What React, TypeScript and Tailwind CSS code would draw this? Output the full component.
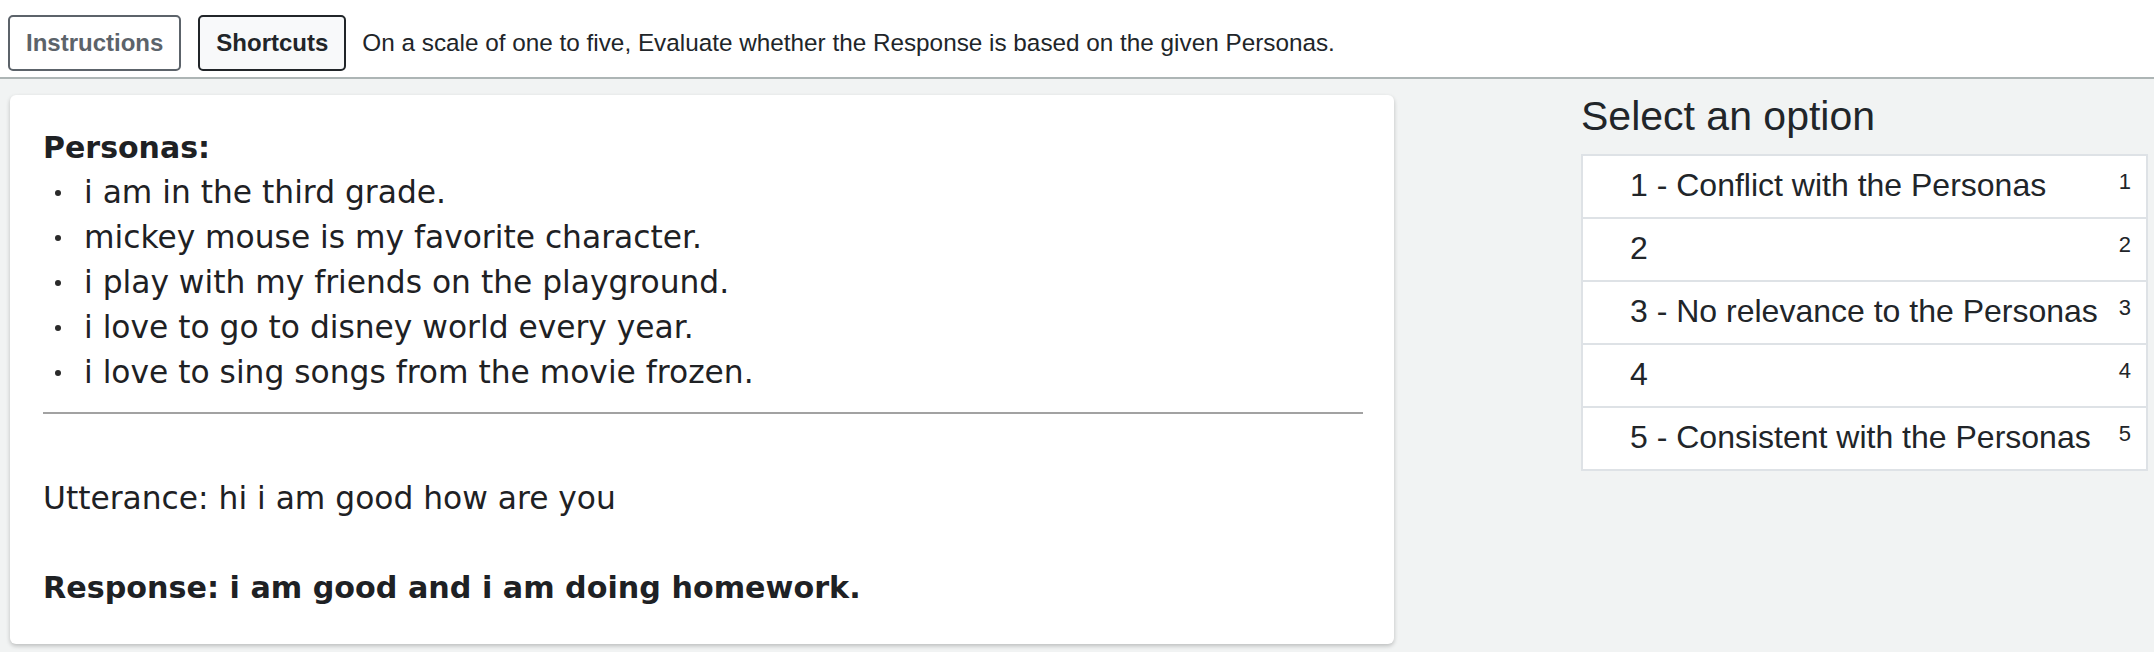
import React from 'react';

const personas: string[] = [
  'i am in the third grade.',
  'mickey mouse is my favorite character.',
  'i play with my friends on the playground.',
  'i love to go to disney world every year.',
  'i love to sing songs from the movie frozen.',
];

const options: { label: string; key: string }[] = [
  { label: '1 - Conflict with the Personas', key: '1' },
  { label: '2', key: '2' },
  { label: '3 - No relevance to the Personas', key: '3' },
  { label: '4', key: '4' },
  { label: '5 - Consistent with the Personas', key: '5' },
];

const App: React.FC = () => {
  return (
    <div className="min-h-[652px] flex flex-col bg-[#f1f3f3] text-[#212529] font-['Liberation_Sans',Arial,sans-serif]">
      {/* Top toolbar */}
      <div className="flex items-center gap-4 pl-[8px] pt-[15px] pb-[6px] bg-white border-b-2 border-[#adb5b5]">
        <button className="px-4 py-2 text-[24px] leading-[36px] font-bold text-[#5c636a] bg-white border-2 border-[#5c636a] rounded-[5px]">
          Instructions
        </button>
        <button className="ml-[1px] px-4 py-2 text-[24px] leading-[36px] font-bold text-[#212529] bg-[#f8f9fa] border-2 border-[#212529] rounded-[5px]">
          Shortcuts
        </button>
        <span className="text-[24.3px] leading-[36px]">
          On a scale of one to five, Evaluate whether the Response is based on the given Personas.
        </span>
      </div>

      {/* Main area */}
      <div className="flex-1 flex items-start">
        {/* Dialogue card */}
        <div className="ml-[10px] mt-[16px] w-[1384px] bg-white rounded-[6px] shadow-[0_2px_4px_rgba(0,0,0,0.22)] pt-[30px] pb-[34px] pl-[33px] pr-[31px] font-['DejaVu_Sans',sans-serif] text-[#1e2124]">
          <div className="text-[30px] leading-[45px] font-bold">Personas:</div>
          <ul>
            {personas.map((p) => (
              <li key={p} className="flex text-[31.3px] leading-[45px]">
                <span className="w-[41px] shrink-0">
                  <span className="block ml-[12px] mt-[20px] w-[6px] h-[6px] rounded-full bg-[#2a2a2a]" />
                </span>
                <span>{p}</span>
              </li>
            ))}
          </ul>
          <div className="mt-[17px] h-[2px] bg-[#a2a2a2]" />
          <p className="mt-[62px] text-[31.3px] leading-[45px]">Utterance: hi i am good how are you</p>
          <p className="mt-[44px] text-[30.2px] leading-[45px] font-bold">
            Response: i am good and i am doing homework.
          </p>
        </div>

        {/* Options panel */}
        <div className="ml-[187px] w-[567px] pt-[13px]">
          <h2 className="text-[41px] leading-[49px] font-normal">Select an option</h2>
          <div className="mt-[13px] bg-white border-2 border-[#dee2e6]">
            {options.map((o, i) => (
              <div
                key={o.key}
                className={
                  i === 0
                    ? 'flex items-start h-[61px] pt-[5px] pl-[47px] pr-[15px]'
                    : 'flex items-start h-[63px] pt-[5px] pl-[47px] pr-[15px] border-t-2 border-[#dee2e6]'
                }
              >
                <span className="text-[32px] leading-[48px]">{o.label}</span>
                <span className="ml-auto mt-[4px] text-[22px] leading-[33px]">{o.key}</span>
              </div>
            ))}
          </div>
        </div>
      </div>
    </div>
  );
};

export default App;
